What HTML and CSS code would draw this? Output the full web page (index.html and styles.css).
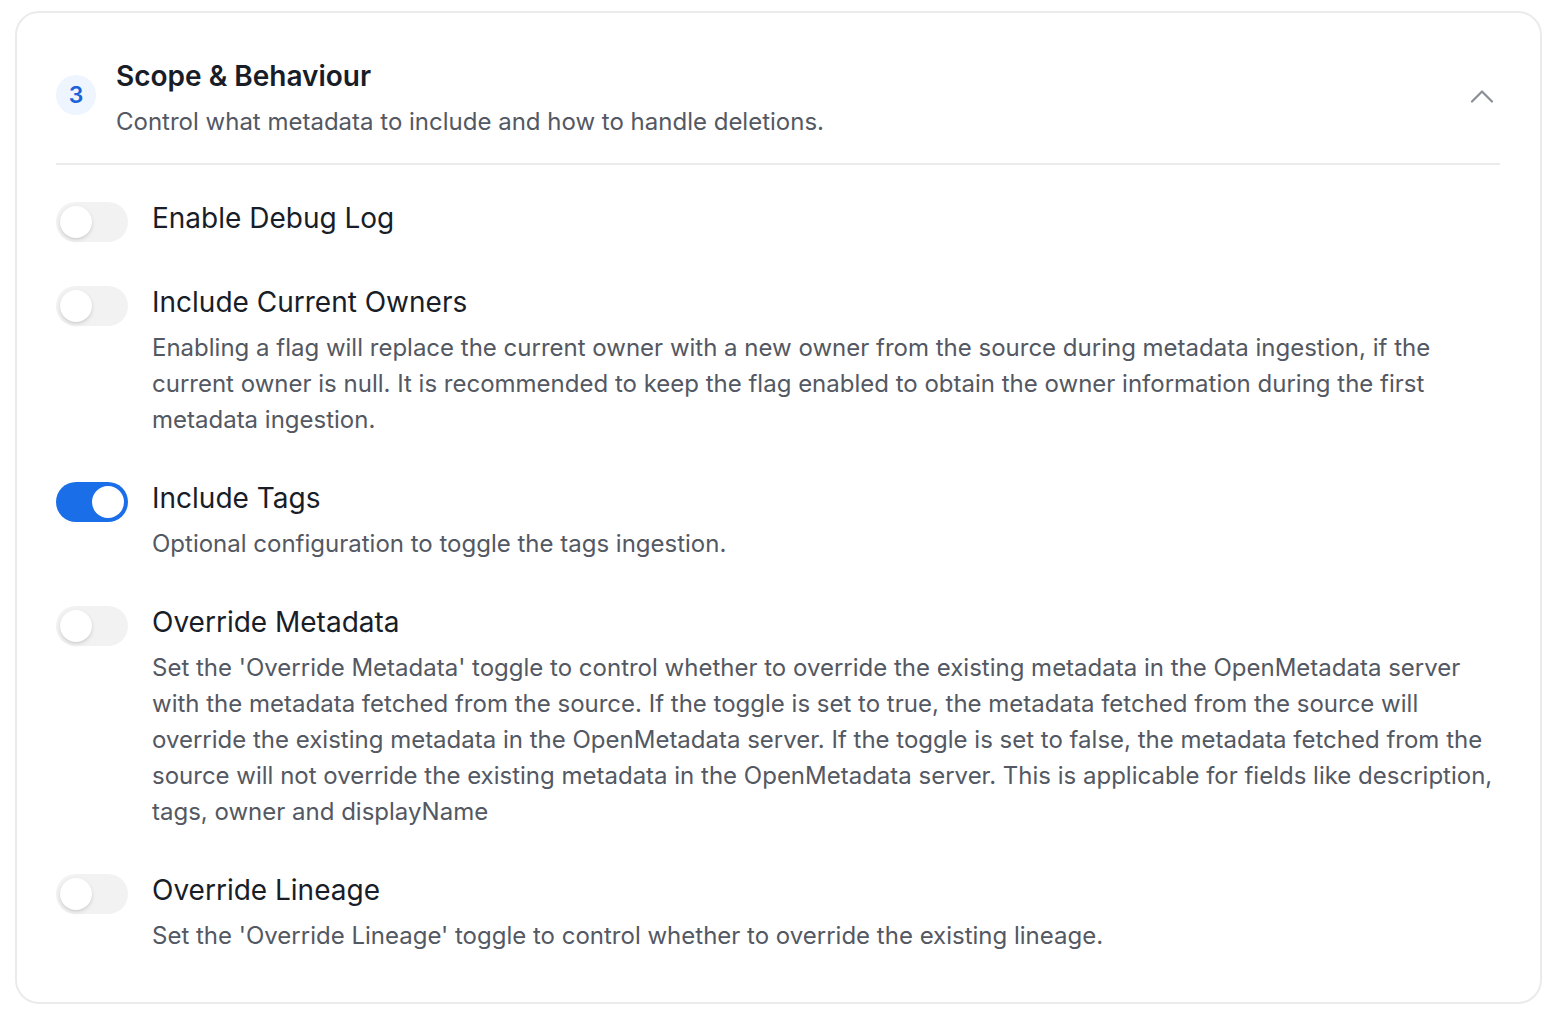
FILE: index.html
```html
<!DOCTYPE html>
<html lang="en">
<head>
<meta charset="utf-8">
<title>Scope &amp; Behaviour</title>
<link rel="stylesheet" href="styles.css">
</head>
<body>
<section class="card">
  <header class="card-header">
    <div class="step">3</div>
    <div class="heading">
      <h2 class="title">Scope &amp; Behaviour</h2>
      <p class="subtitle">Control what metadata to include and how to handle deletions.</p>
    </div>
    <svg class="chevron" width="24" height="14" viewBox="0 0 24 14" fill="none">
      <path d="M2 12.5L12 2.5L22 12.5" stroke="#8a8e96" stroke-width="2.2" stroke-linecap="round" stroke-linejoin="round"/>
    </svg>
  </header>
  <div class="divider"></div>
  <div class="options">
    <div class="option">
      <span class="toggle"><span class="knob"></span></span>
      <div class="option-text">
        <div class="label">Enable Debug Log</div>
      </div>
    </div>
    <div class="option">
      <span class="toggle"><span class="knob"></span></span>
      <div class="option-text">
        <div class="label">Include Current Owners</div>
        <p class="desc">Enabling a flag will replace the current owner with a new owner from the source during metadata ingestion, if the current owner is null. It is recommended to keep the flag enabled to obtain the owner information during the first metadata ingestion.</p>
      </div>
    </div>
    <div class="option">
      <span class="toggle on"><span class="knob"></span></span>
      <div class="option-text">
        <div class="label">Include Tags</div>
        <p class="desc">Optional configuration to toggle the tags ingestion.</p>
      </div>
    </div>
    <div class="option">
      <span class="toggle"><span class="knob"></span></span>
      <div class="option-text">
        <div class="label">Override Metadata</div>
        <p class="desc">Set the 'Override Metadata' toggle to control whether to override the existing metadata in the OpenMetadata server with the metadata fetched from the source. If the toggle is set to true, the metadata fetched from the source will override the existing metadata in the OpenMetadata server. If the toggle is set to false, the metadata fetched from the source will not override the existing metadata in the OpenMetadata server. This is applicable for fields like description, tags, owner and displayName</p>
      </div>
    </div>
    <div class="option">
      <span class="toggle"><span class="knob"></span></span>
      <div class="option-text">
        <div class="label">Override Lineage</div>
        <p class="desc">Set the 'Override Lineage' toggle to control whether to override the existing lineage.</p>
      </div>
    </div>
  </div>
</section>
</body>
</html>
```

FILE: styles.css
```css
* { box-sizing: border-box; }
html, body { margin: 0; padding: 0; background: #ffffff; }
body {
  font-family: Inter, "Noto Sans", "Liberation Sans", sans-serif;
  padding: 11px 11px 0 15px;
}
.card {
  width: 1527px;
  height: 993px;
  border: 2px solid #ebebeb;
  border-radius: 24px;
  padding: 45px 40px 0 39px;
  background: #fff;
}
.card-header {
  display: flex;
  align-items: flex-start;
  gap: 20px;
}
.step {
  width: 40px;
  height: 40px;
  flex: none;
  margin-top: 17px;
  border-radius: 50%;
  background: #eef5ff;
  color: #1a62d8;
  font-size: 23px;
  font-weight: 600;
  display: flex;
  align-items: center;
  justify-content: center;
}
.heading { flex: 1; }
.title {
  margin: 0;
  font-size: 28px;
  line-height: 36px;
  font-weight: 600;
  color: #181d27;
}
.subtitle {
  margin: 10px 0 0;
  font-size: 24px;
  line-height: 36px;
  color: #535862;
}
.chevron { flex: none; margin-top: 31px; margin-right: 6px; }
.divider {
  height: 2px;
  background: #ebebeb;
  margin-top: 23px;
}
.options {
  display: flex;
  flex-direction: column;
  gap: 40px;
  padding-top: 33px;
}
.option {
  display: flex;
  align-items: flex-start;
  gap: 24px;
}
.toggle {
  flex: none;
  width: 72px;
  height: 40px;
  margin-top: 4px;
  border-radius: 20px;
  background: #f2f2f2;
  padding: 4px;
  display: flex;
}
.knob {
  width: 32px;
  height: 32px;
  border-radius: 50%;
  background: #fff;
  box-shadow: 0 2px 4px rgba(16, 24, 40, 0.12), 0 1px 2px rgba(16, 24, 40, 0.06);
}
.toggle.on { background: #1a6fe8; justify-content: flex-end; }
.toggle.on .knob { box-shadow: none; }
.option-text { flex: 1; }
.label {
  font-size: 28px;
  line-height: 40px;
  color: #181d27;
}
.desc {
  margin: 8px 0 0;
  font-size: 24px;
  line-height: 36px;
  color: #535862;
}
```
